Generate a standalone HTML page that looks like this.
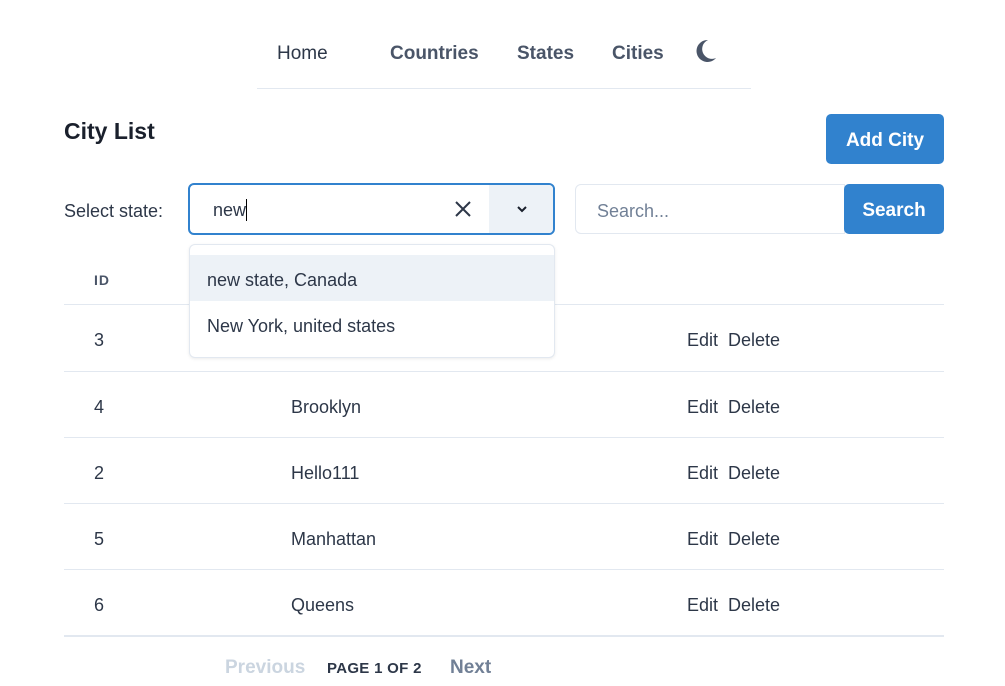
<!DOCTYPE html>
<html><head><style>
*{margin:0;padding:0;box-sizing:border-box}
body{width:1005px;height:686px;background:#fff;font-family:"Liberation Sans","DejaVu Sans",sans-serif;color:#2d3748;position:relative;overflow:hidden;font-size:18px}
.a{position:absolute;white-space:nowrap}
.nav{top:42px;font-size:19px;color:#4a5568;line-height:24px}
.line{position:absolute;left:64px;width:880px;height:1px;background:#e2e8f0}
.row{position:absolute;left:0;width:1005px;line-height:24px;font-size:18px;color:#2d3748}
.row span{position:absolute}
</style></head><body>
<div class="a nav" style="left:277px;color:#2d3748">Home</div>
<div class="a nav" style="left:390px;font-weight:600">Countries</div>
<div class="a nav" style="left:517px;font-weight:600">States</div>
<div class="a nav" style="left:612px;font-weight:600">Cities</div>
<svg class="a" style="left:695px;top:39px" width="22" height="24" viewBox="0 0 22 24"><path d="M13 1A11 11 0 1 0 21 19A9 9 0 0 1 13 1Z" fill="#4a5568"/></svg>
<div class="a" style="left:257px;top:88px;width:494px;height:1px;background:#e2e8f0"></div>

<div class="a" style="left:64px;top:118px;font-size:23px;font-weight:700;color:#1a202c">City List</div>
<div class="a" style="left:826px;top:114px;width:118px;height:50px;background:#3182ce;border-radius:5px;color:#fff;font-weight:700;font-size:19px;line-height:54px;text-align:center">Add City</div>

<div class="a" style="left:64px;top:201px;color:#2d3748">Select state:</div>
<div class="a" style="left:188px;top:183px;width:367px;height:52px;border:2px solid #3182ce;border-radius:6px;overflow:hidden">
 <div class="a" style="left:23px;top:14px;line-height:22px">new<span style="display:inline-block;width:1px;height:22px;background:#000;vertical-align:top"></span></div>
 <svg class="a" style="left:265px;top:16px" width="16" height="16" viewBox="0 0 16 16"><path d="M1 1L15 15M15 1L1 15" stroke="#2d3748" stroke-width="2"/></svg>
 <div class="a" style="left:299px;top:0;width:66px;height:48px;background:#edf2f7"></div>
 <svg class="a" style="left:326px;top:20px" width="12" height="8" viewBox="0 0 12 8"><path d="M2 2L6 6L10 2" stroke="#1a202c" stroke-width="2" fill="none"/></svg>
</div>
<div class="a" style="left:575px;top:184px;width:270px;height:50px;border:1px solid #e2e8f0;border-radius:6px 0 0 6px;color:#718096;padding-left:21px;line-height:53px">Search...</div>
<div class="a" style="left:844px;top:184px;width:100px;height:50px;background:#3182ce;border-radius:5px;color:#fff;font-weight:700;font-size:19px;line-height:54px;text-align:center">Search</div>

<div class="a" style="left:94px;top:272px;font-size:14px;font-weight:700;color:#4a5568;letter-spacing:1px">ID</div>
<div class="line" style="top:304px"></div>
<div class="line" style="top:371px"></div>
<div class="line" style="top:437px"></div>
<div class="line" style="top:503px"></div>
<div class="line" style="top:569px"></div>
<div class="line" style="top:635px;height:2px"></div>

<div class="row" style="top:328px"><span style="left:94px">3</span><span style="left:687px">Edit&nbsp; Delete</span></div>
<div class="row" style="top:395px"><span style="left:94px">4</span><span style="left:291px">Brooklyn</span><span style="left:687px">Edit&nbsp; Delete</span></div>
<div class="row" style="top:461px"><span style="left:94px">2</span><span style="left:291px">Hello111</span><span style="left:687px">Edit&nbsp; Delete</span></div>
<div class="row" style="top:527px"><span style="left:94px">5</span><span style="left:291px">Manhattan</span><span style="left:687px">Edit&nbsp; Delete</span></div>
<div class="row" style="top:593px"><span style="left:94px">6</span><span style="left:291px">Queens</span><span style="left:687px">Edit&nbsp; Delete</span></div>

<div class="a" style="left:189px;top:244px;width:366px;height:114px;background:#fff;border:1px solid #e2e8f0;border-radius:6px;box-shadow:0 1px 3px rgba(0,0,0,.08);overflow:hidden">
 <div class="a" style="left:0;top:10px;width:366px;height:46px;background:#edf2f7"></div>
 <div class="a" style="left:17px;top:23px;line-height:24px">new state, Canada</div>
 <div class="a" style="left:17px;top:69px;line-height:24px">New York, united states</div>
</div>

<div class="a" style="left:225px;top:657px;font-size:19px;font-weight:600;color:#cbd5e0">Previous</div>
<div class="a" style="left:327px;top:660px;font-size:15px;font-weight:700;color:#2d3748;letter-spacing:.3px">PAGE 1 OF 2</div>
<div class="a" style="left:450px;top:657px;font-size:19px;font-weight:600;color:#718096">Next</div>
</body></html>
